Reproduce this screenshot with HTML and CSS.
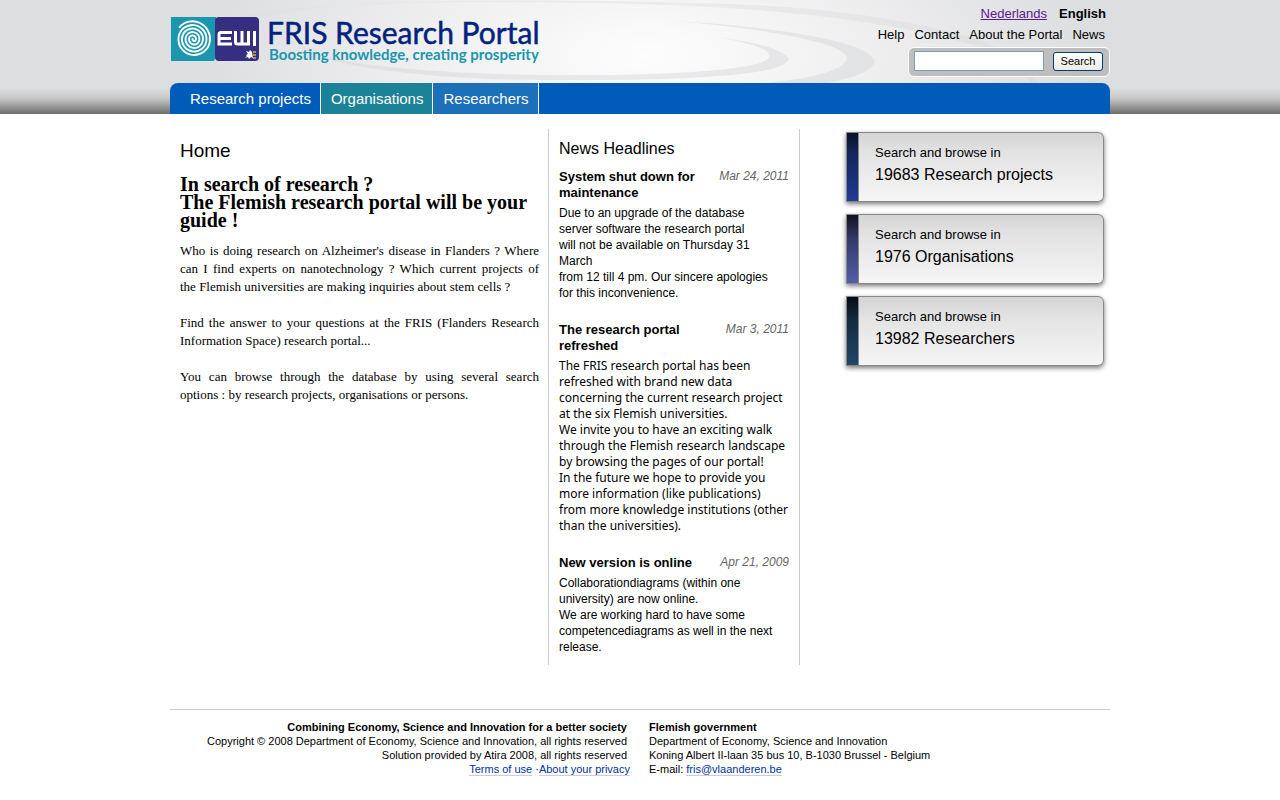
FILE: index.html
```html
<!DOCTYPE html>
<html lang="en">
<head>
<meta charset="utf-8">
<title>FRIS Research Portal</title>
<link rel="stylesheet" href="styles.css">
</head>
<body>
<header class="header">
  <svg class="swirl" viewBox="0 0 940 83" preserveAspectRatio="xMidYMin slice" aria-hidden="true">
    <defs>
      <radialGradient id="glow" gradientUnits="userSpaceOnUse" cx="0" cy="0" r="1" gradientTransform="translate(475 56) scale(450 185)">
        <stop offset="0" stop-color="#fdfdfd"/>
        <stop offset=".5" stop-color="#efeff0"/>
        <stop offset="1" stop-color="#dddee0"/>
      </radialGradient>
    </defs>
    <rect width="940" height="83" fill="url(#glow)"/>
    <g fill="#d5d6d8" opacity=".45">
      <path d="M545 37Q602 46 599 57C594 70 500 76 370 75C230 73 135 60 133 44C130 60 230 79 370 80C510 81 615 76 619 59Q610 45 545 37Z"/>
      <path d="M505 21C590 28 680 43 677 59C673 71 640 79 595 83H657Q703 74 705 61C700 42 610 27 505 21Z"/>
      <path d="M170 5C300-1 490 1 610 12Q720 22 800 44Q850 60 860 83H868Q850 52 800 37Q700 9 560 4C390-1 260 0 170 5Z" opacity=".7"/>
      <path d="M0 38C35 20 100 8 170 5C90 15 30 27 0 45Z" opacity=".3"/>
    </g>
  </svg>
  <div class="wrap">
    <div class="masthead">
      <a class="brand" href="#" aria-label="FRIS Research Portal">
        <svg class="brand-logo" viewBox="0 0 372 52">
          <path d="M0 4h45v39l-2 5H0Z" fill="#1a96ae"/>
          <path d="M48 4h36q4 0 4 4v36q0 4-4 4H48q-4 0-4-4V8q0-4 4-4Z" fill="#352f82"/>
          <path d="M21.500 26A1.750 1.750 0 0 0 25 26A3.500 3.500 0 0 0 18 26A5.250 5.250 0 0 0 28.500 26A7 7 0 0 0 14.500 26A8.750 8.750 0 0 0 32 26A10.500 10.500 0 0 0 11 26A12.250 12.250 0 0 0 35.500 26A14 14 0 0 0 7.500 26A15.750 15.750 0 0 0 39 26A17.500 17.500 0 0 0 7 16" fill="none" stroke="#fff" stroke-width="1.900" stroke-linecap="round" transform="rotate(8 21.500 26)"/>
          <path d="M61 19.500H50q-2 0-2 2v9.500h13M49 25.500h11M64.500 18v11q0 2 2 2h11V18M71 18v13M83.500 18v15" fill="none" stroke="#fff" stroke-width="3"/>
          <path d="m75 38 3 1 1-2 2 2 1 6-2-1-2 2-1-2-3 1 2-2-1-1 2-1Z" fill="#fff"/>
          <path d="M82 39h3m-3 3h3m-3 3h3" fill="none" stroke="#a9954b" stroke-width="2"/>
          <text class="brand-name" x="96" y="31">FRIS Research Portal</text>
          <text class="brand-tag" x="98" y="47">Boosting knowledge, creating prosperity</text>
        </svg>
      </a>
      <div class="tools">
        <nav class="languages" aria-label="Language"><a href="#">Nederlands</a><strong>English</strong></nav>
        <nav class="links" aria-label="Site"><a href="#">Help</a><a href="#">Contact</a><a href="#">About the Portal</a><a href="#">News</a></nav>
        <form class="search"><input type="text" aria-label="Search text"><button type="submit">Search</button></form>
      </div>
    </div>
    <nav class="tabs" aria-label="Main"><a href="#">Research projects</a><a class="teal" href="#">Organisations</a><a class="light" href="#">Researchers</a></nav>
  </div>
</header>
<main class="wrap content">
  <section class="intro">
    <h1>Home</h1>
    <h2>In search of research ?<br>The Flemish research portal will be your guide !</h2>
    <p>Who is doing research on Alzheimer's disease in Flanders ? Where can I find experts on nanotechnology ? Which current projects of the&nbsp;Flemish universities are making inquiries about stem cells ?</p>
    <p>Find the answer to your questions at the FRIS (Flanders Research Information Space) research portal...</p>
    <p>You can browse through the database by using several search options : by research projects, organisations or persons.</p>
  </section>
  <section class="news">
    <h2>News Headlines</h2>
    <article>
      <header><h3>System shut down for maintenance</h3><time>Mar 24, 2011</time></header>
      <p>Due to an upgrade of the database<br>server software the research portal<br>will not be available on Thursday 31<br>March<br>from 12 till 4 pm. Our sincere apologies<br>for this inconvenience.</p>
    </article>
    <article>
      <header><h3>The research portal refreshed</h3><time>Mar 3, 2011</time></header>
      <p class="wide">The FRIS research portal has been<br>refreshed with brand new data<br>concerning the current research project<br>at the six Flemish universities.<br>We invite you to have an exciting walk<br>through the Flemish research landscape<br>by browsing the pages of our portal!<br>In the future we hope to provide you<br>more information (like publications)<br>from more knowledge institutions (other<br>than the universities).</p>
    </article>
    <article>
      <header><h3>New version is online</h3><time>Apr 21, 2009</time></header>
      <p>Collaborationdiagrams (within one university) are now online.<br>We are working hard to have some competencediagrams as well in the next release.</p>
    </article>
  </section>
  <aside class="browse">
    <a class="projects" href="#"><span>Search and browse in</span><b>19683 Research projects</b></a>
    <a class="organisations" href="#"><span>Search and browse in</span><b>1976 Organisations</b></a>
    <a class="researchers" href="#"><span>Search and browse in</span><b>13982 Researchers</b></a>
  </aside>
</main>
<footer class="wrap footer">
  <div class="legal">
    <strong>Combining Economy, Science and Innovation for a better society</strong>
    <span>Copyright © 2008 Department of Economy, Science and Innovation, all rights reserved</span>
    <span>Solution provided by Atira 2008, all rights reserved</span>
    <span class="terms"><a href="#">Terms of use</a> ·<a href="#">About your privacy</a></span>
  </div>
  <address>
    <strong>Flemish government</strong>
    <span>Department of Economy, Science and Innovation</span>
    <span>Koning Albert II-laan 35 bus 10, B-1030 Brussel - Belgium</span>
    <span>E-mail: <a href="#">fris@vlaanderen.be</a></span>
  </address>
</footer>
</body>
</html>
```
FILE: styles.css
```css
* { box-sizing: border-box; }
body { margin: 0; background: #fff; color: #000; font: 12px/16px "Liberation Sans", Arial, sans-serif; }
h1, h2, h3, p { margin: 0; }
.wrap { width: 100%; max-width: 940px; margin: 0 auto; }
.header { position: relative; background: linear-gradient(#dddee0 0 88px, #c8c8c9 98px, #9c9c9c 106px, #6c6c6c 114px); }
.swirl { position: absolute; top: 0; left: 50%; width: 940px; height: 83px; transform: translateX(-50%); }
.header > .wrap { position: relative; }
.masthead { display: flex; justify-content: space-between; min-height: 83px; }
.brand { margin: 13px 0 0 1px; }
.brand-logo { display: block; width: 372px; height: 52px; }
.brand-name { font: 30px Lato, sans-serif; fill: #00237f; stroke: #00237f; stroke-width: .5; }
.brand-tag { font: bold 15px Lato, sans-serif; fill: #1a96ae; }
.tools { display: flex; flex-direction: column; align-items: flex-end; font-size: 13px; }
.languages { display: flex; gap: 12px; padding: 6px 4px 0 0; }
.languages a { color: #551a8b; }
.links { display: flex; gap: 10px; margin: 5px 5px 4px 0; }
.links a { color: #000; text-decoration: none; }
.search { display: flex; align-items: center; gap: 9px; height: 30px; padding: 0 6px 2px 5px; border: 1px solid #fff; border-radius: 6px; background: #bebebe; }
.search input { width: 130px; height: 20px; border: 1px solid #7f9db9; background: #fff; }
.search button { width: 50px; height: 19px; padding: 0; border: 1px solid #003c74; border-radius: 3px; background: linear-gradient(#fff, #ecebe6); font: 11px "Liberation Sans", Arial, sans-serif; }
.tabs { display: flex; height: 31px; padding-left: 10px; overflow: hidden; border-radius: 8px 8px 0 0; background: #005bb9; font-size: 15px; line-height: 32px; }
.tabs a { padding: 0 9px 0 10px; border-right: 1px solid #fff; color: #fff; text-decoration: none; }
.tabs .teal { background: #1b8297; }
.tabs .light { background: #1c6fb9; }
.content { display: grid; grid-template-columns: 379px 251px 1fr; padding-top: 15px; }
.content .news { margin-left: -1px; }
.intro { padding: 12px 10px 0; font: 13px/18px "Liberation Serif", "Times New Roman", serif; text-align: justify; }
.intro h1 { margin-bottom: 14px; font: 19px/20px "Liberation Sans", Arial, sans-serif; }
.intro h2 { margin-bottom: 13px; font-size: 20px; line-height: 18px; text-align: left; }
.intro p { margin-bottom: 18px; }
.news { padding: 10px 10px; border: solid #ccc; border-width: 0 1px; }
.news h2 { margin-bottom: 10px; font-size: 16px; font-weight: normal; line-height: 20px; }
.news article { margin-bottom: 21px; }
.news article:last-child { margin-bottom: 0; }
.news header { display: flex; justify-content: space-between; align-items: flex-start; margin-bottom: 4px; }
.news h3 { width: 150px; font-size: 13px; }
.news time { color: #666; font-style: italic; line-height: 14px; }
.news p { white-space: nowrap; }
.news article:last-child p { white-space: normal; }
.news .wide { font-family: "Noto Sans", Tahoma, sans-serif; }
.browse { display: flex; flex-direction: column; gap: 12px; padding: 3px 6px 0 46px; }
.browse a { position: relative; height: 70px; padding: 12px 0 0 29px; border: 1px solid #888; border-left: 0; border-radius: 0 6px 6px 0; background: linear-gradient(#d4d4d4, #e3e3e3 30%, #f5f5f5); box-shadow: 0 2px 5px #777; color: #000; text-decoration: none; }
.browse a::before { content: ""; position: absolute; inset: 0 auto 0 0; width: 11px; border: 1px solid #888; border-width: 0 1px; background: linear-gradient(#081126, #13265e 30%, #203c92); }
.browse .organisations::before { background: linear-gradient(#11121c, #34396a 35%, #545ea9); }
.browse .researchers::before { background: linear-gradient(#050b12, #13293e 30%, #214767); }
.browse span, .browse b { display: block; }
.browse span { font-size: 13px; }
.browse b { margin-top: 4px; font-size: 16px; font-weight: normal; line-height: 20px; }
.footer { display: grid; grid-template-columns: 457px 1fr; gap: 22px; margin-top: 44px; padding: 10px 0; border-top: 1px solid #ccc; font-size: 11px; line-height: 14px; }
.footer span, .footer strong { display: block; }
.legal { text-align: right; }
.legal .terms { margin-right: -3px; }
.footer address { font-style: normal; }
.footer a { color: #039; text-decoration: none; border-bottom: 1px solid #ccd; }
```
